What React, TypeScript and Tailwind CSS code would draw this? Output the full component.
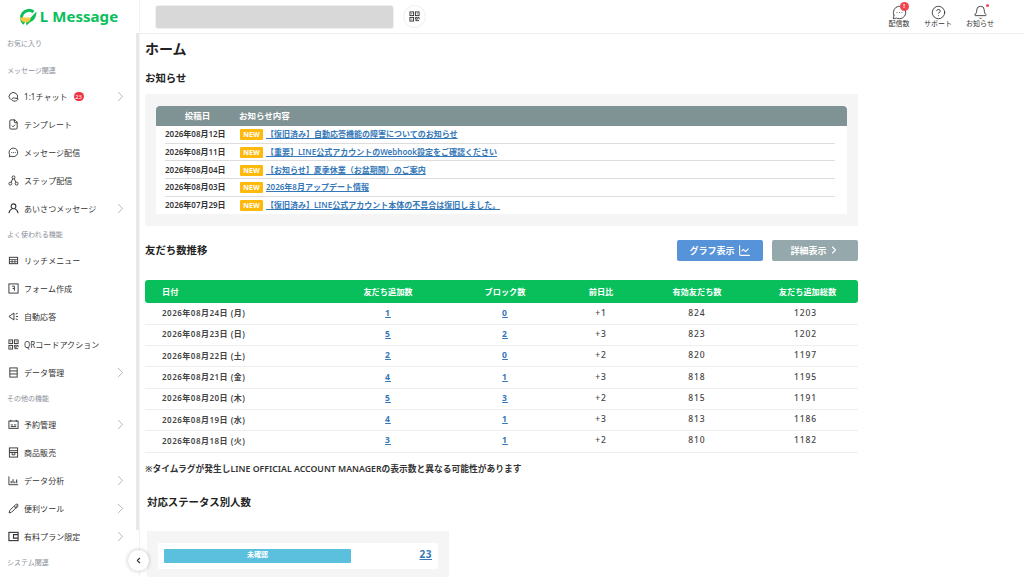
import React from "react";
import { ChevronRight, ChevronLeft, FileCheck, MessageCircleMore, CircleQuestionMark, Bell, ChartLine } from "lucide-react";

const font = "font-['Noto_Sans','Noto_Sans_CJK_JP',sans-serif]";

type IconProps = { className?: string };
const base = { viewBox: "0 0 12 12", fill: "none", stroke: "currentColor", strokeWidth: 1 };

const ChatIcon = ({ className }: IconProps) => (
  <svg {...base} className={className}>
    <path d="M2.6 9.2 A4.6 4.4 0 1 1 9.6 8.6" />
    <path d="M4 9.3 C4.6 7.6 6 7.4 7 7.6 C8.5 7.8 9.8 8.5 11 8.4 C10.6 9.6 9.8 10.7 8 11 C6.2 11.2 4.5 10.6 4 9.3 Z" />
  </svg>
);
const DocIcon = FileCheck;
const BubbleIcon = ({ className }: IconProps) => (
  <svg {...base} className={className}>
    <path d="M6 1.2 A4.9 4.7 0 1 1 3.3 10 L1.4 10.8 L1.8 8.3 A4.9 4.7 0 0 1 6 1.2 Z" />
    <path d="M3.6 6 H8.4" strokeWidth="1" strokeDasharray="1 1" />
  </svg>
);
const StepIcon = ({ className }: IconProps) => (
  <svg {...base} className={className}>
    <circle cx="6" cy="2.6" r="1.6" />
    <circle cx="2.6" cy="9.4" r="1.6" />
    <circle cx="9.4" cy="9.4" r="1.6" />
    <path d="M5.2 4 L3.4 8 M6.8 4 L8.6 8" />
  </svg>
);
const UserIcon = ({ className }: IconProps) => (
  <svg {...base} className={className} strokeWidth="1.2">
    <circle cx="6" cy="3.6" r="2.6" />
    <path d="M1 11 C1.6 8.2 3.4 6.6 4.6 6.2 M11 11 C10.4 8.2 8.6 6.6 7.4 6.2" />
  </svg>
);
const RichIcon = ({ className }: IconProps) => (
  <svg {...base} className={className}>
    <rect x="1.5" y="2.5" width="9" height="7" />
    <path d="M1.5 5 H10.5 M1.5 7.3 H10.5 M4.5 5 V9.5 M7.5 5 V9.5" strokeWidth="0.8" />
  </svg>
);
const FormIcon = ({ className }: IconProps) => (
  <svg {...base} className={className}>
    <rect x="1" y="1" width="10" height="10" />
    <path d="M4.5 3.5 H7 V8.5 M5 6 H7" />
  </svg>
);
const SpeakerIcon = ({ className }: IconProps) => (
  <svg {...base} className={className}>
    <path d="M1 6 L6.5 2.2 V9.8 Z" strokeLinejoin="round" />
    <path d="M8.5 3.4 L10.5 2.6 M8.7 6 H11 M8.5 8.6 L10.5 9.4" />
  </svg>
);
const QrIcon = ({ className }: IconProps) => (
  <svg {...base} className={className}>
    <rect x="1" y="1" width="4" height="4" />
    <rect x="7" y="1" width="4" height="4" />
    <rect x="1" y="7" width="4" height="4" />
    <path d="M7 7 H9 V9 H7 Z M9.5 7 H11 V9 M7 10.5 H11" />
    <rect x="2.5" y="2.5" width="1" height="1" fill="currentColor" stroke="none" />
    <rect x="8.5" y="2.5" width="1" height="1" fill="currentColor" stroke="none" />
    <rect x="2.5" y="8.5" width="1" height="1" fill="currentColor" stroke="none" />
  </svg>
);
const DataIcon = ({ className }: IconProps) => (
  <svg {...base} className={className}>
    <rect x="2" y="1" width="8" height="10" />
    <path d="M2 4.3 H10 M2 7.6 H10" />
  </svg>
);
const CalIcon = ({ className }: IconProps) => (
  <svg {...base} className={className}>
    <rect x="1" y="2.2" width="10" height="8" />
    <path d="M3 1 V3 M9 1 V3 M3 6.5 H5.5 M6.5 6.5 H9 M3 8.3 H9" />
  </svg>
);
const ShopIcon = ({ className }: IconProps) => (
  <svg {...base} className={className}>
    <rect x="1.5" y="1" width="9" height="10" />
    <path d="M1.5 4 H10.5 M1.5 6 H10.5 M4.5 6 V8.5 H7.5 V6" />
  </svg>
);
const ChartIcon = ({ className }: IconProps) => (
  <svg {...base} className={className}>
    <path d="M1 1.5 V10.6 H11" />
    <path d="M3.5 9 V6.5 M5.5 9 V4.5 M7.5 9 V7 M9.5 9 V5" strokeWidth="1.1" />
  </svg>
);
const ToolIcon = ({ className }: IconProps) => (
  <svg {...base} className={className}>
    <path d="M1.2 10.8 L2 8 L6.5 3.5 L8.5 5.5 L4 10 Z" />
    <path d="M6.5 3.5 L8 2 C9 1 10.5 1 11 2 L9 3.5 L8.5 5.5 C9.5 5.5 10.6 4.6 11 3" />
  </svg>
);
const WalletIcon = ({ className }: IconProps) => (
  <svg {...base} className={className} strokeWidth="1.2">
    <rect x="1" y="1.5" width="10" height="9" />
    <path d="M11 4 H6 V7.8 H11" />
  </svg>
);

type Item = { label: string; icon: React.ElementType; arrow?: boolean; badge?: string };

const groups: { title: string; items: Item[] }[] = [
  { title: "お気に入り", items: [] },
  {
    title: "メッセージ関連",
    items: [
      { label: "1:1チャット", icon: ChatIcon, arrow: true, badge: "23" },
      { label: "テンプレート", icon: DocIcon },
      { label: "メッセージ配信", icon: BubbleIcon },
      { label: "ステップ配信", icon: StepIcon },
      { label: "あいさつメッセージ", icon: UserIcon, arrow: true },
    ],
  },
  {
    title: "よく使われる機能",
    items: [
      { label: "リッチメニュー", icon: RichIcon },
      { label: "フォーム作成", icon: FormIcon },
      { label: "自動応答", icon: SpeakerIcon },
      { label: "QRコードアクション", icon: QrIcon },
      { label: "データ管理", icon: DataIcon, arrow: true },
    ],
  },
  {
    title: "その他の機能",
    items: [
      { label: "予約管理", icon: CalIcon, arrow: true },
      { label: "商品販売", icon: ShopIcon },
      { label: "データ分析", icon: ChartIcon, arrow: true },
      { label: "便利ツール", icon: ToolIcon, arrow: true },
      { label: "有料プラン限定", icon: WalletIcon, arrow: true },
    ],
  },
  { title: "システム関連", items: [] },
];

const news = [
  ["2026年08月12日", "【復旧済み】自動応答機能の障害についてのお知らせ"],
  ["2026年08月11日", "【重要】LINE公式アカウントのWebhook設定をご確認ください"],
  ["2026年08月04日", "【お知らせ】夏季休業（お盆期間）のご案内"],
  ["2026年08月03日", "2026年8月アップデート情報"],
  ["2026年07月29日", "【復旧済み】LINE公式アカウント本体の不具合は復旧しました。"],
];

const stats = [
  ["2026年08月24日 (月)", "1", "0", "+1", "824", "1203"],
  ["2026年08月23日 (日)", "5", "2", "+3", "823", "1202"],
  ["2026年08月22日 (土)", "2", "0", "+2", "820", "1197"],
  ["2026年08月21日 (金)", "4", "1", "+3", "818", "1195"],
  ["2026年08月20日 (木)", "5", "3", "+2", "815", "1191"],
  ["2026年08月19日 (水)", "4", "1", "+3", "813", "1186"],
  ["2026年08月18日 (火)", "3", "1", "+2", "810", "1182"],
];

function Logo() {
  return (
    <div className="flex h-[33px] shrink-0 items-center justify-center gap-[3px] pr-[2px]">
      <svg width="18" height="18" viewBox="0 0 18 18">
        <path d="M5.2 15.6 A7 7 0 1 1 14.5 4" fill="none" stroke="#08bf5b" strokeWidth="3" />
        <path d="M17.5 3.5 C17.5 9 15 13 11 14.2 L7.5 17.6 L7 14.5 Z" fill="#08bf5b" />
        <path d="M0.6 9.5 H12 C11.6 12.5 9.5 14.6 7 14.6 C4 14.6 1.4 12.6 0.6 9.5 Z" fill="#f6c945" />
      </svg>
      <span className="pb-[1px] text-[15px] font-bold leading-none tracking-[0.05px] text-[#08bf5b] font-['Noto_Sans',sans-serif]">L Message</span>
    </div>
  );
}

function NavItem({ item }: { item: Item }) {
  const Icon = item.icon;
  return (
    <div className="flex h-[28px] items-center pl-[8px] pr-[10px]">
      <Icon className="h-[11px] w-[11px] shrink-0 text-[#333]" />
      <span className="ml-[5px] text-[8px] tracking-[0.05px] text-[#333]">{item.label}</span>
      {item.badge && (
        <span className="ml-[6px] flex h-[9px] w-[10px] items-center justify-center rounded-full bg-[#f0303f] text-[6px] leading-none text-white">{item.badge}</span>
      )}
      {item.arrow && <ChevronRight className="ml-auto h-[17px] w-[17px] text-[#aaaaaa]" strokeWidth={1.2} />}
    </div>
  );
}

function Sidebar() {
  return (
    <aside className="relative flex h-full w-[139px] shrink-0 flex-col overflow-hidden bg-white">
      <Logo />
      <nav className="flex flex-col pt-[3px]">
        {groups.map((g) => (
          <div key={g.title} className="flex flex-col pb-[4.5px]">
            <div className="mb-[2.5px] flex h-[17px] items-center pl-[7px] text-[7px] text-[#8b8f9a]">{g.title}</div>
            <div className="flex flex-col">
              {g.items.map((i) => <NavItem key={i.label} item={i} />)}
            </div>
            {g.items.length === 0 && <div className="h-[3px]" />}
          </div>
        ))}
      </nav>
      <div className="absolute right-0 top-[33px] h-[497px] w-[3px] bg-[#e8e8e8]" />
    </aside>
  );
}

function TopAction({ label, width, children }: { label: string; width: string; children: React.ReactNode }) {
  return (
    <div className={`relative flex flex-col items-center ${width}`}>
      {children}
      <span className="mt-[-1px] text-[7px] leading-[10px] text-[#333]">{label}</span>
    </div>
  );
}

function Header() {
  return (
    <header className="flex h-[34px] shrink-0 items-center border-b border-[#eeeeee] bg-white pl-[15px] pr-[23px]">
      <div className="h-[24px] w-[239px] rounded-[3px] border border-[#f0f0f0] bg-[#d8d8d8]" />
      <div className="ml-[9px] flex h-[23px] w-[23px] items-center justify-center rounded-full border border-[#eeeeee]">
        <QrIcon className="h-[11px] w-[11px] text-[#333]" />
      </div>
      <div className="ml-auto flex items-center">
        <TopAction label="配信数" width="w-[36px]">
          <MessageCircleMore className="h-[15px] w-[15px] text-[#333]" strokeWidth={1.4} />
          <span className="absolute left-[18.5px] top-[-3px] flex h-[9px] w-[9px] items-center justify-center rounded-full bg-[#f0464f] text-[6px] font-bold leading-none text-white">!</span>
        </TopAction>
        <TopAction label="サポート" width="w-[42px]">
          <CircleQuestionMark className="h-[15px] w-[15px] text-[#333]" strokeWidth={1.4} />
        </TopAction>
        <TopAction label="お知らせ" width="w-[42px]">
          <Bell className="h-[15px] w-[15px] text-[#333]" strokeWidth={1.4} />
          <span className="absolute left-[27px] top-[-1px] h-[3px] w-[3px] rounded-full bg-[#f0464f]" />
        </TopAction>
      </div>
    </header>
  );
}

function NewsPanel() {
  return (
    <section className="mt-[8px] bg-[#f5f5f5] px-[11px] pb-[12px] pt-[12px]">
      <div className="bg-white">
        <div className="flex h-[20px] items-center rounded-t-[4px] bg-[#7f9294] text-[8.5px] font-bold text-white">
          <span className="w-[83px] text-center">投稿日</span>
          <span>お知らせ内容</span>
        </div>
        <div className="pl-[9px] pr-[12px]">
          {news.map(([d, t], i) => (
            <div key={d} className={`flex h-[17.7px] items-center border-b ${i < 4 ? "border-[#dddddd]" : "border-transparent"}`}>
              <span className="w-[75px] shrink-0 text-[8px] font-semibold text-[#333]">{d}</span>
              <span className="mt-[1px] flex h-[11px] w-[23px] shrink-0 items-center justify-center rounded-[1px] bg-[#ffb80c] text-[7px] font-bold leading-none text-white">NEW</span>
              <a className="ml-[3px] text-[8px] font-semibold text-[#3578b8] underline">{t}</a>
            </div>
          ))}
        </div>
      </div>
    </section>
  );
}

function StatsTable() {
  const cols = ["w-[186px] text-left pl-[17px]", "w-[114px] text-center", "w-[120px] text-center", "w-[72px] text-center", "w-[120px] text-center", "w-[101px] text-center pr-[4px]"];
  const heads = ["日付", "友だち追加数", "ブロック数", "前日比", "有効友だち数", "友だち追加総数"];
  return (
    <div className="mt-[19px]">
      <div className="flex h-[23px] items-center rounded-[3px] bg-[#08bf5b] text-[8.2px] font-bold text-white">
        {heads.map((h, i) => <span key={h} className={i === 5 ? "w-[101px] text-center" : cols[i]}>{h}</span>)}
      </div>
      {stats.map((r) => (
        <div key={r[0]} className="flex h-[21.3px] items-center border-b border-[#eeeeee] pb-[1px] text-[8.5px] font-medium tracking-[0.9px] text-[#444]">
          {r.map((c, i) => (
            <span key={i} className={`${cols[i]} ${i === 0 ? "text-[8px] font-semibold tracking-[0.5px]" : ""} ${i === 1 || i === 2 ? "font-bold text-[#3578b8] underline" : ""}`}>{c}</span>
          ))}
        </div>
      ))}
    </div>
  );
}

export default function App() {
  return (
    <div className={`flex h-screen w-full overflow-hidden bg-white ${font}`}>
      <div className="relative flex h-full shrink-0">
        <Sidebar />
        <button className="absolute bottom-[6px] right-[-10px] z-10 flex h-[21px] w-[21px] items-center justify-center rounded-full bg-white shadow-[0_0_4px_rgba(0,0,0,0.25)]">
          <ChevronLeft className="h-[9px] w-[9px] text-[#333]" strokeWidth={3} />
        </button>
      </div>
      <div className="flex min-w-0 flex-1 flex-col border-l border-[#f2f2f2]">
        <Header />
        <div className="flex min-h-0 flex-1 overflow-hidden">
          <main className="w-[718px] shrink-0 overflow-hidden pl-[5px]">
            <h1 className="mt-[4px] text-[14px] font-bold leading-[22px] text-[#222]">ホーム</h1>
            <h2 className="mt-[10px] text-[10.4px] font-bold leading-[16px] text-[#222]">お知らせ</h2>
            <NewsPanel />
            <div className="mt-[13px] flex h-[22px] items-center">
              <h2 className="text-[10.4px] font-bold text-[#222]">友だち数推移</h2>
              <button className="ml-auto flex h-[21px] w-[86px] items-center justify-center gap-[3px] rounded-[2px] bg-[#5693d8] text-[9px] font-bold text-white">
                グラフ表示 <ChartLine className="h-[13px] w-[13px]" strokeWidth={2} />
              </button>
              <button className="ml-[9px] flex h-[21px] w-[86px] items-center justify-center gap-[1px] rounded-[2px] bg-[#95a8ab] text-[9px] font-bold text-white">
                詳細表示 <ChevronRight className="h-[12px] w-[12px]" strokeWidth={2.2} />
              </button>
            </div>
            <StatsTable />
            <p className="mt-[10px] text-[8.75px] font-semibold text-[#333]">※タイムラグが発生しLINE OFFICIAL ACCOUNT MANAGERの表示数と異なる可能性があります</p>
            <h2 className="ml-[2px] mt-[17px] text-[10.4px] font-bold leading-[18px] text-[#222]">対応ステータス別人数</h2>
            <section className="ml-[2px] mt-[20px] h-[60px] w-[302px] bg-[#f5f5f5] pl-[11px] pr-[11px] pt-[12px]">
              <div className="flex h-[26px] items-center bg-white px-[6px]">
                <div className="flex h-[14px] w-[187px] items-center justify-center rounded-[1px] bg-[#5bc0de] text-[7px] font-bold text-white">未確認</div>
                <a className="ml-auto mb-[2px] text-[10px] font-bold tracking-[0.5px] text-[#3578b8] underline">23</a>
              </div>
            </section>
          </main>
        </div>
      </div>
    </div>
  );
}
